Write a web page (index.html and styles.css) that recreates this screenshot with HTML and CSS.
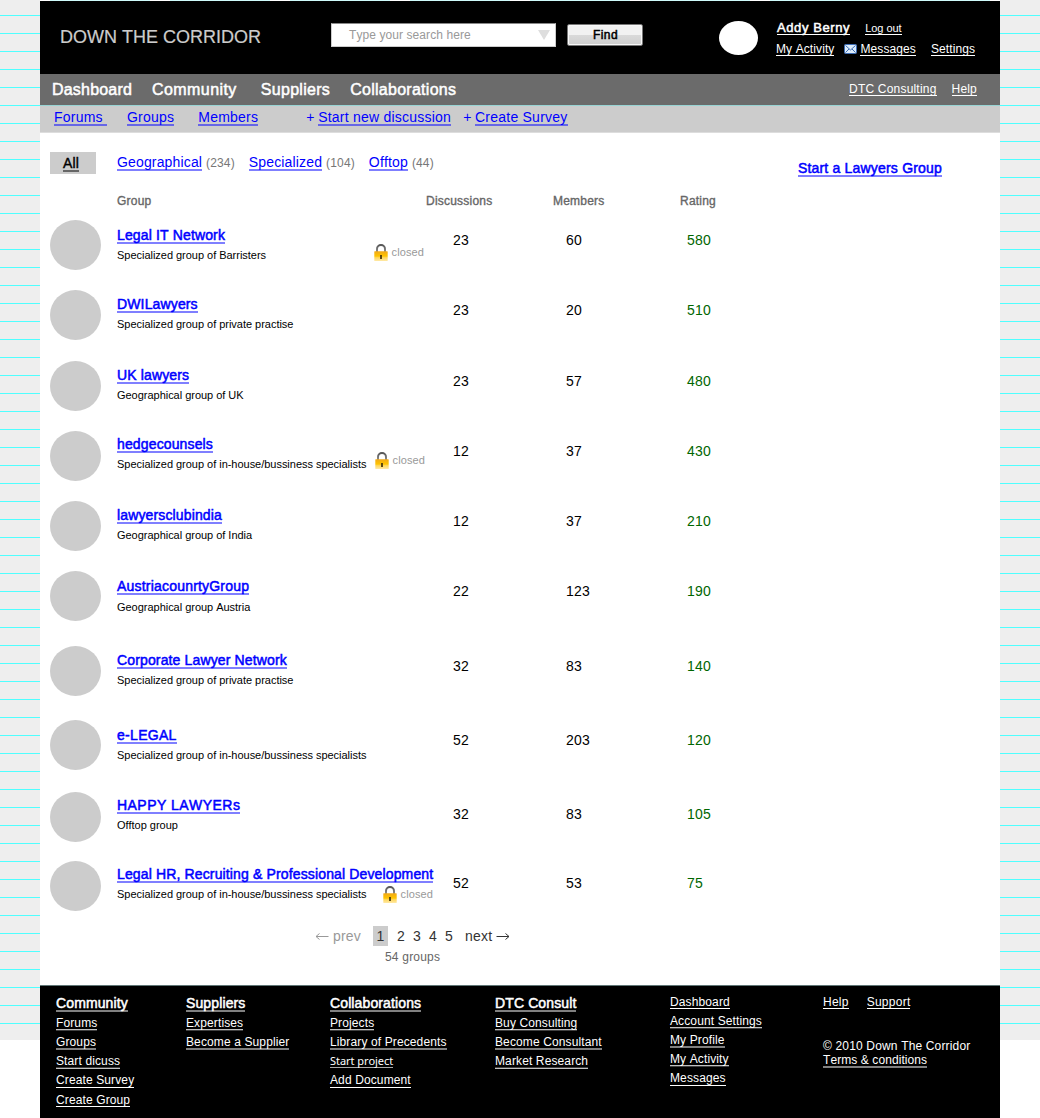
FILE: index.html
```
<!DOCTYPE html>
<html lang="en">
<head>
<meta charset="utf-8">
<title>Down The Corridor – Groups</title>
<link rel="stylesheet" href="styles.css">
</head>
<body>
<svg width="0" height="0" class="defs" aria-hidden="true">
  <defs>
    <linearGradient id="gold" x1="0" y1="0" x2="0" y2="1"><stop offset="0" stop-color="#f0a818"/><stop offset=".5" stop-color="#ffc400"/><stop offset=".65" stop-color="#ffd75a"/><stop offset="1" stop-color="#ffe9a8"/></linearGradient>
    <linearGradient id="steel" x1="0" y1="0" x2="0" y2="1"><stop offset="0" stop-color="#555"/><stop offset="1" stop-color="#999"/></linearGradient>
  </defs>
  <symbol id="lock" viewBox="0 0 14 18">
    <path d="M3 9V5a4 4 0 0 1 8 0V9" fill="none" stroke="url(#steel)" stroke-width="2"/>
    <rect x=".3" y="7.200" width="13.400" height="9.800" rx=".6" fill="url(#gold)"/>
    <path d="M6.100 11h1.800v4H6.100z" fill="#4a3a10"/>
  </symbol>
</svg>
<div class="page">
  <header class="top">
    <h1 class="brand">DOWN THE CORRIDOR</h1>
    <div class="search"><span>Type your search here</span><i class="arrow"></i></div>
    <button class="find">Find</button>
    <div class="avatar"></div>
    <div class="user">
      <div class="line first"><a class="lk name">Addy Berny</a><a class="lk logout">Log out</a></div>
      <div class="line"><a class="lk">My Activity</a>
        <svg class="mail" width="13" height="10" viewBox="0 0 13 10"><rect x=".5" y=".5" width="12" height="9" rx="1" fill="#dcecfb" stroke="#3c6cb4"/><path d="M1.5 1.5 6.5 6l5-4.500M1.500 8.500 5 5M11.500 8.500 8 5" fill="none" stroke="#3c6cb4"/></svg>
        <a class="lk">Messages</a><a class="lk settings">Settings</a></div>
    </div>
  </header>
  <nav class="main">
    <a>Dashboard</a><a>Community</a><a>Suppliers</a><a>Collaborations</a>
    <div class="side"><a class="lk">DTC Consulting</a><a class="lk">Help</a></div>
  </nav>
  <nav class="sub">
    <a class="lk">Forums&nbsp;</a><a class="lk">Groups</a><a class="lk">Members</a>
    <span class="act">+<a class="lk">Start new discussion</a></span><span class="act">+<a class="lk">Create Survey</a></span>
  </nav>
  <main>
    <div class="filters">
      <div class="all"><a class="lk">All</a></div>
      <span><a class="lk">Geographical</a> <small>(234)</small></span>
      <span><a class="lk">Specialized</a> <small>(104)</small></span>
      <span><a class="lk">Offtop</a> <small>(44)</small></span>
      <a class="lk start">Start a Lawyers Group</a>
    </div>
    <div class="heads"><span>Group</span><span>Discussions</span><span>Members</span><span>Rating</span></div>
    <div class="groups">
      <div class="row"><div class="pic"></div><div class="info"><a class="lk">Legal IT Network</a><p>Specialized group of Barristers</p></div><div class="closed"><svg width="14" height="18"><use href="#lock"/></svg>closed</div><b class="talks">23</b><b class="people">60</b><b class="rate">580</b></div>
      <div class="row"><div class="pic"></div><div class="info"><a class="lk">DWILawyers</a><p>Specialized group of private practise</p></div><b class="talks">23</b><b class="people">20</b><b class="rate">510</b></div>
      <div class="row"><div class="pic"></div><div class="info"><a class="lk">UK lawyers</a><p>Geographical group of UK</p></div><b class="talks">23</b><b class="people">57</b><b class="rate">480</b></div>
      <div class="row"><div class="pic"></div><div class="info"><a class="lk">hedgecounsels</a><p>Specialized group of in-house/bussiness specialists</p></div><div class="closed"><svg width="14" height="18"><use href="#lock"/></svg>closed</div><b class="talks">12</b><b class="people">37</b><b class="rate">430</b></div>
      <div class="row"><div class="pic"></div><div class="info"><a class="lk">lawyersclubindia</a><p>Geographical group of India</p></div><b class="talks">12</b><b class="people">37</b><b class="rate">210</b></div>
      <div class="row"><div class="pic"></div><div class="info"><a class="lk">AustriacounrtyGroup</a><p>Geographical group Austria</p></div><b class="talks">22</b><b class="people">123</b><b class="rate">190</b></div>
      <div class="row"><div class="pic"></div><div class="info"><a class="lk">Corporate Lawyer Network</a><p>Specialized group of private practise</p></div><b class="talks">32</b><b class="people">83</b><b class="rate">140</b></div>
      <div class="row"><div class="pic"></div><div class="info"><a class="lk">e-LEGAL</a><p>Specialized group of in-house/bussiness specialists</p></div><b class="talks">52</b><b class="people">203</b><b class="rate">120</b></div>
      <div class="row"><div class="pic"></div><div class="info"><a class="lk caps">HAPPY LAWYERs</a><p>Offtop group</p></div><b class="talks">32</b><b class="people">83</b><b class="rate">105</b></div>
      <div class="row"><div class="pic"></div><div class="info"><a class="lk">Legal HR, Recruiting &amp; Professional Development</a><p>Specialized group of in-house/bussiness specialists</p></div><div class="closed"><svg width="14" height="18"><use href="#lock"/></svg>closed</div><b class="talks">52</b><b class="people">53</b><b class="rate">75</b></div>
    </div>
    <div class="pager">
      <span class="prev"><svg width="14" height="9" viewBox="0 0 14 9"><path d="M13.500 4.500H1M4.500 1.500 1 4.500l3.500 3" fill="none" stroke="currentColor"/></svg>prev</span>
      <span class="cur">1</span><span>2</span><span>3</span><span>4</span><span>5</span>
      <span class="next">next<svg width="14" height="9" viewBox="0 0 14 9"><path d="M.5 4.500H13M9.500 1.500 13 4.500l-3.500 3" fill="none" stroke="currentColor"/></svg></span>
    </div>
    <div class="total">54 groups</div>
  </main>
  <footer>
    <div class="col"><a class="lk h">Community</a><a class="lk mid">Forums</a><a class="lk soft">Groups</a><a class="lk low">Start dicuss</a><a class="lk under">Create Survey</a><a class="lk">Create Group</a></div>
    <div class="col"><a class="lk h">Suppliers</a><a class="lk mid">Expertises</a><a class="lk soft">Become a Supplier</a></div>
    <div class="col"><a class="lk h">Collaborations</a><a class="lk mid">Projects</a><a class="lk soft">Library of Precedents</a><a class="lk alt">Start project</a><a class="lk under">Add Document</a></div>
    <div class="col"><a class="lk h">DTC Consult</a><a class="lk mid">Buy Consulting</a><a class="lk soft">Become Consultant</a><a class="lk low">Market Research</a></div>
    <div class="col plain"><a class="lk">Dashboard</a><a class="lk mid">Account Settings</a><a class="lk soft">My Profile</a><a class="lk mid">My Activity</a><a class="lk under">Messages</a></div>
    <div class="col plain last"><div class="pair"><a class="lk">Help</a><a class="lk">Support</a></div><span>© 2010 Down The Corridor</span><a class="lk soft">Terms &amp; conditions</a></div>
  </footer>
</div>
</body>
</html>
```
FILE: styles.css
```
* { box-sizing: border-box; margin: 0; padding: 0; }
body {
  width: 1040px; height: 1118px; overflow: hidden; padding: 0 40px;
  font: 14px/16px "Liberation Sans", Arial, sans-serif; font-kerning: none;
  background: repeating-linear-gradient(transparent 0 15px, #4fffff 15px 16px, transparent 16px 18px) 0 0 / 100% 1040px no-repeat,
    linear-gradient(#eee, #eee) 0 0 / 100% 1040px no-repeat, #fff;
}
.defs { position: absolute; }
.page {
  width: 960px; height: 1118px; padding-top: 1px; display: flex; flex-direction: column;
  background: repeating-linear-gradient(90deg, #cffafa 0 100px, #fff 100px 120px) -110px 0 / 1200px 1px repeat-x, #fff;
}

/* Links carry a two-pixel rule made of an upper and a lower line */
.lk {
  --ua: rgba(0,0,255,.5); --ub: rgba(0,0,255,.5);
  display: inline-block; white-space: nowrap;
  background: linear-gradient(var(--ua) 0 1px, var(--ub) 1px 2px) 0 100% / 100% 2px no-repeat;
}
header .lk, .main .lk, footer .lk { --ua: #fff; --ub: transparent; }
footer .mid { --ua: #c0c0c0; --ub: #404040; }
footer .low { --ua: #404040; --ub: #c0c0c0; }
footer .under { --ua: transparent; --ub: #fff; }
footer .soft, footer .h { --ua: #808080; --ub: #808080; }
.sub .lk, .filters .lk, .info .lk, footer .h { height: 16px; line-height: 14px; }

.top { height: 73px; background: #000; display: flex; align-items: flex-start; color: #fff; }
.brand { font-size: 18px; font-weight: 400; line-height: 20px; color: #ccc; margin: 26px 0 0 20px; width: 271px; white-space: nowrap; -webkit-text-stroke: .2px; }
.search { width: 225px; height: 24px; margin-top: 22px; background: #fff; border: 1px solid #ccc; border-top-color: #888; padding: 0 5px 0 17px; display: flex; align-items: center; justify-content: space-between; font-size: 12px; color: #999; letter-spacing: .08px; }
.arrow { border: 6px solid transparent; border-top: 10px solid #dedede; border-bottom: 0; }
.find { width: 76px; height: 22px; margin: 23px 0 0 11px; padding-left: 1px; border: 1px solid #777; border-radius: 2px; box-shadow: inset 0 0 0 1px #f8f8f8; background: linear-gradient(#f2f2f2 0 50%, #dadada 50%, #cfcfcf); font: 12px/18px "Liberation Sans", Arial, sans-serif; -webkit-text-stroke: .5px; letter-spacing: .4px; color: #000; }
.avatar { width: 39px; height: 34px; border-radius: 50%; background: #fff; margin: 20px 0 0 76px; }
.user { margin: 19px 0 0 18px; font-size: 12px; letter-spacing: .1px; }
.line { display: flex; }
.line.first { margin-left: 1px; height: 21px; }
.name { font-size: 13px; -webkit-text-stroke: .5px; height: 16px; letter-spacing: .6px; }
.logout { font-size: 11px; margin-left: 15px; height: 16px; letter-spacing: -.05px; }
.mail { margin: 3px 3px 0 10px; }
.settings { margin-left: 15px; }

.main { height: 31px; background: #6b6b6b; display: flex; padding: 6px 23px 0 12px; color: #fff; font-size: 16px; line-height: 20px; letter-spacing: .2px; }
nav.main > a { -webkit-text-stroke: .5px; margin-right: 20px; }
nav.main > a:nth-child(2) { margin-right: 24px; letter-spacing: .42px; }
nav.main > a:nth-child(3) { letter-spacing: .3px; }
nav.main > a:nth-child(4) { letter-spacing: .27px; }
.side { margin-left: auto; display: flex; gap: 15px; font-size: 12px; line-height: 16px; padding-top: 1px; letter-spacing: .2px; }
.side .lk { height: 16px; }
.sub { height: 28px; background: #ccc; border-top: 1px solid #98d4d4; border-bottom: 1px solid #ddd; display: flex; align-items: flex-start; padding: 4px 0 0 14px; color: #00f; letter-spacing: .23px; }
.sub > .lk { color: #00f; margin-right: 24px; }
.sub > .lk:nth-child(1) { margin-right: 20px; }
.sub > .lk:nth-child(3) { margin-right: 48px; }
.act { margin-right: 12px; display: flex; gap: 3.5px; line-height: 14px; }

main { height: 852px; }
.filters { display: flex; height: 60px; padding: 19px 58px 0 10px; letter-spacing: .15px; color: #00f; }
.filters > span { display: flex; gap: 4px; margin: 3px 14px 0 0; white-space: nowrap; }
.filters small { font-size: 12px; line-height: 16px; color: #777; letter-spacing: .15px; }
.all { width: 46px; height: 22px; background: #ccc; margin-right: 21px; padding: 3px 0 0 13px; color: #000; -webkit-text-stroke: .4px; }
.all .lk { --ua: #666; --ub: #666; }
.start { margin: 9px 0 0 auto; -webkit-text-stroke: .5px; letter-spacing: .19px; }
.heads { display: grid; grid-template-columns: 309px 127px 127px 1fr; padding-left: 77px; font-size: 12px; color: #666; -webkit-text-stroke: .35px; letter-spacing: .22px; height: 27px; }

.row { display: grid; grid-template-columns: 67px 336px 113px 121px 60px; padding-left: 10px; height: 70px; --t: 7px; --n: 12px; }
.pic { grid-area: 1 / 1; width: 51px; height: 50px; border-radius: 50%; background: #ccc; }
.info { grid-area: 1 / 2; padding-top: var(--t); }
.info .lk { display: block; width: max-content; color: #00f; -webkit-text-stroke: .5px; letter-spacing: .14px; }
.info .caps { letter-spacing: .45px; }
.info p { font-size: 11px; line-height: 14px; margin-top: 4px; color: #000; letter-spacing: -.025px; }
.closed { grid-area: 1 / 2; justify-self: end; height: 18px; display: flex; gap: 4px; font-size: 11px; line-height: 16px; color: #999; margin: 24px 29px 0 0; letter-spacing: .1px; }
.row b { font-weight: 400; margin-top: var(--n); letter-spacing: .25px; }
.row .talks { grid-area: 1 / 3; }
.row .people { grid-area: 1 / 4; }
.row .rate { grid-area: 1 / 5; color: #060; }
.row:nth-child(1), .row:nth-child(6), .row:nth-child(8) { --t: 8px; }
.row:nth-child(4) { --t: 6px; }
.row:nth-child(2) { height: 71px; }
.row:nth-child(6) { height: 75px; }
.row:nth-child(6) .lk { letter-spacing: .2px; }
.row:nth-child(6) p { margin-top: 5px; }
.row:nth-child(7) { height: 74px; }
.row:nth-child(8) { height: 72px; }
.row:nth-child(8) .lk { letter-spacing: .3px; }
.row:nth-child(9) { height: 69px; --t: 6px; --n: 14px; }
.row:nth-child(10) { height: 65px; --t: 6px; --n: 14px; }
.row:nth-child(4) .closed { margin: 21px 28px 0 0; }
.row:nth-child(10) .closed { margin: 25px 20px 0 0; }

.pager { display: flex; padding-left: 275px; height: 24px; line-height: 20px; color: #333; letter-spacing: .2px; }
.pager span { margin-right: 8px; }
.pager .prev { color: #999; margin-right: 12px; }
.prev svg { margin-right: 4px; }
.pager .cur { width: 15px; height: 20px; background: #ccc; text-align: center; margin-right: 9px; }
.pager .next { margin-left: 4px; }
.next svg { margin-left: 4px; }
.total { padding-left: 345px; font-size: 12px; line-height: 14px; color: #666; letter-spacing: .2px; }

footer { flex: 1; background: #000; border-top: 1px solid #5f7575; color: #fff; display: grid; grid-template-columns: 130px 144px 165px 175px 153px 1fr; padding: 10px 0 0 16px; font-size: 12px; letter-spacing: .12px; }
.col { display: flex; flex-direction: column; align-items: flex-start; }
.col .lk { height: 16px; margin-bottom: 3px; }
.col .under + .lk { margin-top: 1px; }
.col .h { font-size: 14px; -webkit-text-stroke: .5px; }
.col .alt { font-family: "Noto Sans", sans-serif; font-size: 11px; letter-spacing: -.05px; --ua: #aaa; }
.plain { margin-top: -2px; }
.pair { display: flex; gap: 18px; height: 44px; letter-spacing: .25px; }
.last { letter-spacing: .16px; }
.last span { line-height: 16px; height: 14px; }
.last > .lk { letter-spacing: .08px; }
```
